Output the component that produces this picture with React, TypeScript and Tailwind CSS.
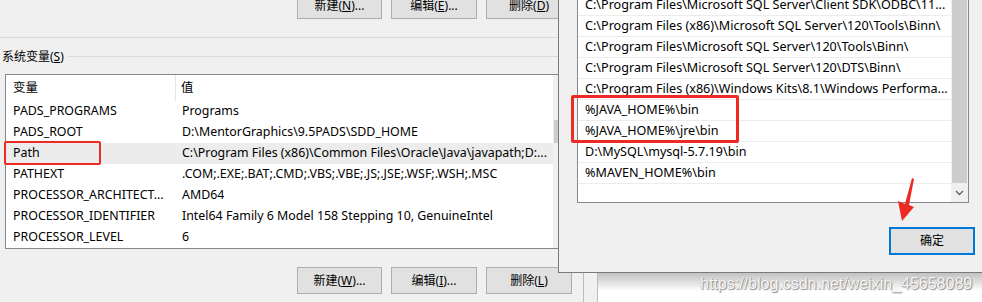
import React from 'react';

const font = "font-['Noto_Sans','Noto_Sans_CJK_SC',sans-serif]";

const sysVars = [
  { name: 'PADS_PROGRAMS', value: 'Programs' },
  { name: 'PADS_ROOT', value: 'D:\\MentorGraphics\\9.5PADS\\SDD_HOME' },
  { name: 'Path', value: 'C:\\Program Files (x86)\\Common Files\\Oracle\\Java\\javapath;D:...', selected: true },
  { name: 'PATHEXT', value: '.COM;.EXE;.BAT;.CMD;.VBS;.VBE;.JS;.JSE;.WSF;.WSH;.MSC' },
  { name: 'PROCESSOR_ARCHITECT...', value: 'AMD64' },
  { name: 'PROCESSOR_IDENTIFIER', value: 'Intel64 Family 6 Model 158 Stepping 10, GenuineIntel' },
  { name: 'PROCESSOR_LEVEL', value: '6' },
];

const pathItems = [
  'C:\\Program Files\\Microsoft SQL Server\\Client SDK\\ODBC\\11...',
  'C:\\Program Files (x86)\\Microsoft SQL Server\\120\\Tools\\Binn\\',
  'C:\\Program Files\\Microsoft SQL Server\\120\\Tools\\Binn\\',
  'C:\\Program Files\\Microsoft SQL Server\\120\\DTS\\Binn\\',
  'C:\\Program Files (x86)\\Windows Kits\\8.1\\Windows Performa...',
  '%JAVA_HOME%\\bin',
  '%JAVA_HOME%\\jre\\bin',
  'D:\\MySQL\\mysql-5.7.19\\bin',
  '%MAVEN_HOME%\\bin',
];

const WinButton: React.FC<{ label: string; hot: string; tail?: string; w: string }> = ({ label, hot, tail = '', w }) => (
  <div className={`${w} h-[27px] shrink-0 bg-[#e1e1e1] border border-[#adadad] flex items-center justify-center text-[12px] text-black`}>
    <span>
      {label}(<span className="underline">{hot}</span>){tail}
    </span>
  </div>
);

const App: React.FC = () => {
  return (
    <div className={`relative w-[982px] h-[302px] overflow-hidden bg-[#f0f0f0] flex ${font}`}>
      {/* Environment variables window */}
      <div className="w-[583px] h-full shrink-0 flex flex-col">
        <div className="h-[19px] overflow-hidden flex items-end pl-[297px] gap-[9px]">
          <WinButton label="新建" hot="N" tail="..." w="w-[85px]" />
          <WinButton label="编辑" hot="E" tail="..." w="w-[86px]" />
          <WinButton label="删除" hot="D" w="w-[86px]" />
        </div>
        <div className="mt-[18px] h-px bg-[#dadada]" />
        <div className="mt-[10px] h-[17px] flex items-center">
          <span className="pl-[2px] text-[12px] text-black leading-none">
            系统变量(<span className="underline">S</span>)
          </span>
          <div className="flex-1 ml-[4px] h-px bg-[#dadada]" />
        </div>

        {/* system variables table */}
        <div className="mt-[9px] ml-[5px] w-[566px] h-[175px] border border-[#828790] bg-white flex">
          <div className="flex-1 flex flex-col text-[12.4px] text-black">
            <div className="h-[26px] flex">
              <div className="w-[170px] border-r border-[#e5e5e5] pl-[7px] flex items-center">变量</div>
              <div className="pl-[5px] flex items-center">值</div>
            </div>
            {sysVars.map((v) => (
              <div key={v.name} className={`h-[21px] flex items-center ${v.selected ? 'bg-[#ececec]' : ''}`}>
                <div className="w-[171px] shrink-0 pl-[7px] whitespace-nowrap overflow-hidden">{v.name}</div>
                <div className="pl-[5px] whitespace-nowrap overflow-hidden">{v.value}</div>
              </div>
            ))}
          </div>
          <div className="w-[17px] bg-[#f0f0f0] flex flex-col">
            <div className="mt-[45px] mx-[1px] h-[23px] bg-[#cdcdcd]" />
          </div>
        </div>

        <div className="mt-[18px] flex pl-[297px] gap-[9px]">
          <WinButton label="新建" hot="W" tail="..." w="w-[85px]" />
          <WinButton label="编辑" hot="I" tail="..." w="w-[86px]" />
          <WinButton label="删除" hot="L" w="w-[86px]" />
        </div>
      </div>

      {/* strip between windows */}
      <div className="w-[15px] h-full shrink-0 border-l border-r border-[#bcbcbc] bg-[#f0f0f0]" />

      {/* page behind */}
      <div className="flex-1 h-full bg-white flex flex-col">
        <div className="h-[273px]" />
        <div className="h-[18px] bg-gradient-to-b from-[#c2c2c2] to-white" />
      </div>

      {/* Edit environment variable dialog */}
      <div className="absolute left-[558px] top-0 w-[440px] h-[273px] bg-[#f0f0f0] border-l border-b border-[#7a7a7a] flex flex-col">
        <div className="ml-[18px] w-[392px] h-[203px] border-x border-b border-[#828790] bg-white flex overflow-hidden">
          <div className="flex-1 overflow-hidden">
            <div className="-mt-[5px] flex flex-col text-[12.6px] text-black">
              {pathItems.map((p) => (
                <div key={p} className="h-[21px] shrink-0 border-b border-[#ececec] pl-[7px] pt-px flex items-center whitespace-nowrap overflow-hidden">
                  {p}
                </div>
              ))}
            </div>
          </div>
          <div className="w-[17px] bg-[#f0f0f0] flex flex-col">
            <div className="h-[183px] mx-[1px] bg-[#cdcdcd]" />
            <div className="flex-1 flex items-center justify-center">
              <svg width="9" height="6" viewBox="0 0 9 6">
                <path d="M1 1 L4.5 4.5 L8 1" fill="none" stroke="#606060" strokeWidth="1.3" />
              </svg>
            </div>
          </div>
        </div>
        <div className="mt-[24px] ml-[330px] w-[86px] h-[28px] border-2 border-[#0078d7] bg-[#e1e1e1] flex items-center justify-center text-[12px] text-black">
          确定
        </div>
      </div>

      {/* annotations */}
      <div className="absolute left-[4px] top-[141px] w-[97px] h-[24px] border-[2.5px] border-[#ee2a24] rounded-[2px]" />
      <div className="absolute left-[571px] top-[95px] w-[168px] h-[48px] border-[3px] border-[#ee2a24] rounded-[2px]" />
      <svg className="absolute left-[890px] top-[174px]" width="30" height="50" viewBox="890 174 30 50">
        <polygon points="912,178 914,179 909,205 914,207 902,221 898,201 905,204" fill="#ee2a24" />
      </svg>

      {/* watermark */}
      <div className="absolute left-[700px] top-[272px] text-[16px] font-['Liberation_Sans',Arial,sans-serif] text-[#f8f8f8] whitespace-nowrap [text-shadow:1px_1px_1px_#8a8a8a,0_0_1px_#9a9a9a]">
        https://blog.csdn.net/weixin_45658089
      </div>
    </div>
  );
};

export default App;
